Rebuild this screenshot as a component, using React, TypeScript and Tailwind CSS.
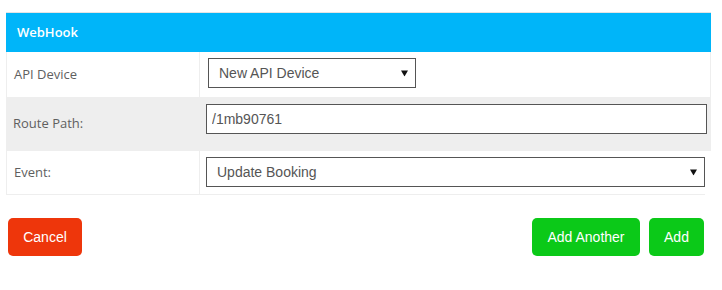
import { useState } from "react";

function Caret() {
  return (
    <svg className="pointer-events-none absolute top-1/2 -translate-y-1/2" style={{ right: 8 }} width="7" height="7" viewBox="0 0 7 7">
      <path d="M0 1h7L3.5 7z" fill="#111" />
    </svg>
  );
}

export default function App() {
  const [device, setDevice] = useState("new");
  const [route, setRoute] = useState("/1mb90761");
  const [event, setEvent] = useState("update");

  const labelCls = "flex w-[193px] shrink-0 items-center pl-[7px] text-[13px] text-[#5f5f5f]";
  const fieldText = "h-[30px] w-full appearance-none rounded-none border border-[#555] bg-white text-[14px] text-[#555] outline-none [font-family:'Liberation_Sans',Arial,sans-serif]";

  return (
    <div className="h-[290px] w-[722px] bg-white pt-[12px] pl-[6px] [font-family:'Open_Sans',sans-serif]">
      <div className="w-[705px] border-t border-[#e4e4e4]">
        <div className="flex h-[39px] items-center bg-[#00b5f9] pl-[11px] text-[13px] font-semibold text-white">WebHook</div>

        <div className="flex h-[45px] border-x border-[#eee]">
          <div className={labelCls + " border-r border-[#eee]"}>API Device</div>
          <div className="pl-[8px] pt-[6px]">
            <div className="relative w-[208px]">
              <select value={device} onChange={(e) => setDevice(e.target.value)} className={fieldText + " pl-[10px]"}>
                <option value="new">New API Device</option>
              </select>
              <Caret />
            </div>
          </div>
        </div>

        <div className="flex h-[54px] bg-[#eee]">
          <div className={labelCls}>Route Path:</div>
          <div className="flex-1 pl-[7px] pr-[4px] pt-[7px]">
            <input value={route} onChange={(e) => setRoute(e.target.value)} className={fieldText + " pl-[5px] text-[#333]"} />
          </div>
        </div>

        <div className="mr-[6px] flex h-[44px] border-b border-l border-[#eee]">
          <div className={labelCls + " w-[192px] border-r border-[#eee]"}>Event:</div>
          <div className="flex-1 pl-[6px] pt-[6px]">
            <div className="relative w-[499px]">
              <select value={event} onChange={(e) => setEvent(e.target.value)} className={fieldText + " pl-[10px]"}>
                <option value="update">Update Booking</option>
              </select>
              <Caret />
            </div>
          </div>
        </div>
      </div>

      <div className="mt-[23px] flex w-[698px] items-center text-[14px] text-white [font-family:'Liberation_Sans',Arial,sans-serif]">
        <button type="button" className="ml-[2px] h-[38px] w-[74px] rounded-[5px] bg-[#ee360b]">Cancel</button>
        <div className="ml-auto flex gap-[9px]">
          <button type="button" className="h-[38px] w-[108px] rounded-[5px] bg-[#0bc918]">Add Another</button>
          <button type="button" className="h-[38px] w-[55px] rounded-[5px] bg-[#0bc918]">Add</button>
        </div>
      </div>
    </div>
  );
}
